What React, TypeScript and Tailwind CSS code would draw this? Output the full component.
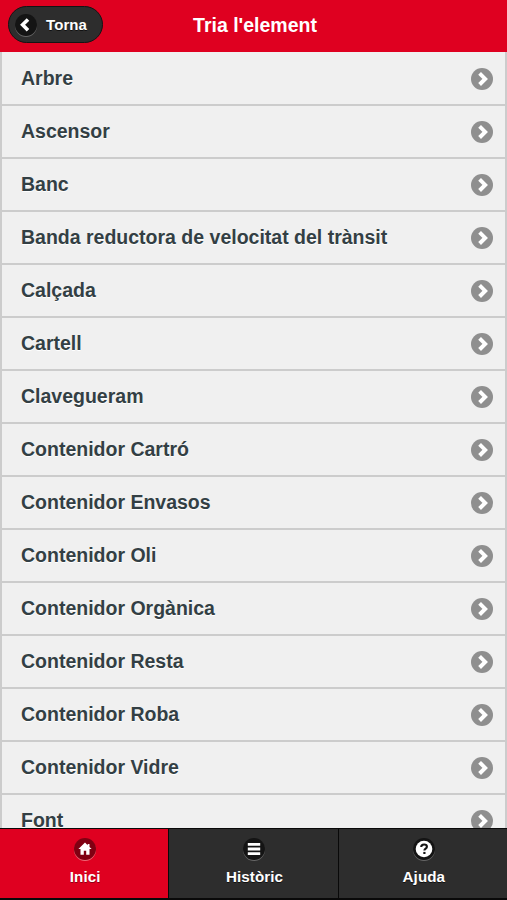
import type { ReactNode } from 'react';
import { clsx } from 'clsx';

const ELEMENTS = [
  'Arbre',
  'Ascensor',
  'Banc',
  'Banda reductora de velocitat del trànsit',
  'Calçada',
  'Cartell',
  'Clavegueram',
  'Contenidor Cartró',
  'Contenidor Envasos',
  'Contenidor Oli',
  'Contenidor Orgànica',
  'Contenidor Resta',
  'Contenidor Roba',
  'Contenidor Vidre',
  'Font',
];

function BackIcon() {
  return (
    <svg viewBox="0 0 22 22" className="size-[22px] shrink-0 rounded-full bg-[#141414] shadow-[0_1px_0_#666]">
      <path d="M13 5.4 7.6 10.8l5.4 5.4" fill="none" stroke="#fff" strokeWidth="3.6" />
    </svg>
  );
}

function ArrowIcon() {
  return (
    <svg viewBox="0 0 22 22" className="mt-px size-[22px] shrink-0">
      <circle cx="11" cy="11" r="11" fill="#8f8f8f" />
      <path d="M8.6 5.3 14.2 10.9l-5.6 5.6" fill="none" stroke="#fff" strokeWidth="3.9" />
    </svg>
  );
}

function HomeIcon() {
  return (
    <svg viewBox="0 0 22 22" className="size-[22px]">
      <path d="M11 4.6 4.4 11.1h2.1v5.6h3.3v-4h2.4v4h3.3v-5.6h2.1l-2.1-2.1V6h-1.8v1.3z" fill="#fff" />
    </svg>
  );
}

function BarsIcon() {
  return (
    <svg viewBox="0 0 22 22" className="size-[22px]">
      <path d="M4.8 5h12.4v2.8H4.8zM4.8 9.6h12.4v2.8H4.8zM4.8 14.2h12.4V17H4.8z" fill="#fff" />
    </svg>
  );
}

function HelpIcon() {
  return (
    <svg viewBox="0 0 22 22" className="size-[22px]">
      <circle cx="11" cy="11" r="8.3" fill="#fff" />
      <path
        d="M8.2 9.1c0-1.7 1.2-2.6 2.9-2.6s2.8.9 2.8 2.2c0 1.8-2.5 1.9-2.5 3.7"
        fill="none"
        stroke="#141414"
        strokeWidth="2.1"
      />
      <path d="M10.3 13.9h2.2V16h-2.2z" fill="#141414" />
    </svg>
  );
}

function NavItem({ label, active, children }: { label: string; active?: boolean; children: ReactNode }) {
  return (
    <a
      className={clsx(
        'flex flex-1 flex-col items-center border-r border-[#090909] pt-[9px] pl-[2px]',
        'text-[15.2px] leading-5 font-bold text-white last:border-r-0',
        active ? 'bg-[#df0020] [text-shadow:0_1px_0_#8c0014]' : 'bg-[#2d2d2d] [text-shadow:0_1px_0_#111]',
      )}
    >
      <span
        className={clsx(
          'rounded-full',
          active ? 'bg-[#800012] shadow-[0_1px_0_#ed6675]' : 'bg-[#141414] shadow-[0_1px_0_#666]',
        )}
      >
        {children}
      </span>
      <span className="mt-[7px] tracking-[0.05px]">{label}</span>
    </a>
  );
}

export default function App() {
  return (
    <div className="flex h-screen flex-col overflow-hidden bg-[#f0f0f0] font-['Liberation_Sans',sans-serif]">
      <header className="grid h-[52px] shrink-0 grid-cols-[1fr_auto_1fr] items-start bg-[#df0020] px-2 pt-[6px]">
        <button
          type="button"
          className="flex h-[37px] w-[95px] items-center rounded-full border border-[#141414] bg-[#2d2d2d] pl-[6px] text-[15px] font-bold text-white [text-shadow:0_1px_0_#111]"
        >
          <BackIcon />
          <span className="mt-[2px] ml-[9px] tracking-[0.1px]">Torna</span>
        </button>
        <h1 className="pt-[5px] pl-[3px] text-[19.5px] leading-7 font-bold text-white">Tria l'element</h1>
      </header>

      <ul className="min-h-0 flex-1 overflow-hidden border-x-2 border-[#cccccc]">
        {ELEMENTS.map((name) => (
          <li
            key={name}
            className="flex h-[52.98px] items-center justify-between border-b-2 border-[#cccccc] bg-[#f0f0f0] pr-3 pl-[19px] first:h-[54px]"
          >
            <span className="text-[19.5px] leading-6 font-bold text-[#333f44] [text-shadow:0_1px_0_#fff]">{name}</span>
            <ArrowIcon />
          </li>
        ))}
      </ul>

      <nav className="flex h-[72px] shrink-0 border-y border-b-2 border-[#090909]">
        <NavItem label="Inici" active>
          <HomeIcon />
        </NavItem>
        <NavItem label="Històric">
          <BarsIcon />
        </NavItem>
        <NavItem label="Ajuda">
          <HelpIcon />
        </NavItem>
      </nav>
    </div>
  );
}
